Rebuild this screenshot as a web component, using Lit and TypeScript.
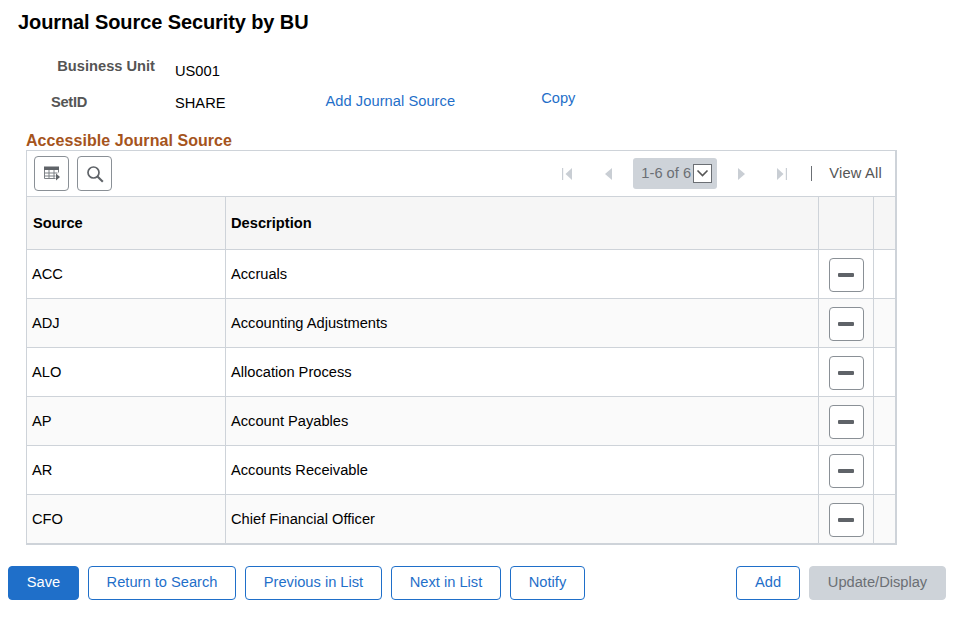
import { LitElement, html, css, svg } from "lit";
import { customElement } from "lit/decorators.js";

const ROWS = [
  ["ACC", "Accruals"],
  ["ADJ", "Accounting Adjustments"],
  ["ALO", "Allocation Process"],
  ["AP", "Account Payables"],
  ["AR", "Accounts Receivable"],
  ["CFO", "Chief Financial Officer"],
];

const tri = (d: string) => svg`<path d=${d} fill="#c9ced4"></path>`;

@customElement("app-root")
export class AppRoot extends LitElement {
  static styles = css`
    :host {
      display: block;
      width: 963px;
      height: 624px;
      box-sizing: border-box;
      background: #fff;
      font-family: "Liberation Sans", Arial, sans-serif;
      font-size: 14.67px;
      color: #000;
      overflow: hidden;
    }
    h1 {
      margin: 0;
      padding: 12px 0 0 18px;
      font-size: 20px;
      letter-spacing: -0.1px;
      line-height: 21px;
      font-weight: bold;
      height: 21px;
    }
    .field-row {
      display: flex;
      align-items: flex-start;
      line-height: 16px;
    }
    .r1 { padding-top: 24px; height: 36px; }
    .r2 { height: 16px; }
    .label { font-weight: bold; color: #555; text-align: right; }
    .r1 .label { width: 155px; margin-top: 1px; }
    .r2 .label { width: 87px; margin-top: 1px; letter-spacing: -0.3px; }
    .r1 .value { margin-left: 20px; margin-top: 6px; }
    .r2 .value { margin-left: 88px; margin-top: 2px; }
    a { color: #1f6fc9; text-decoration: none; }
    .r2 .link1 { margin-left: 100px; letter-spacing: 0.05px; }
    .r2 .link2 { margin-left: 86px; margin-top: -3px; }
    h2 {
      margin: 23px 0 0 26px;
      font-size: 16px;
      line-height: 18px;
      height: 18px;
      font-weight: bold;
      letter-spacing: 0.06px;
      color: #a5541c;
    }
    .grid {
      margin-left: 26px;
      width: 871px;
      box-sizing: border-box;
      border: 1px solid #ced3d9;
      border-right-width: 2px;
      border-bottom-width: 2px;
    }
    .toolbar {
      height: 46px;
      box-sizing: border-box;
      display: flex;
      align-items: center;
      padding: 0 13px 0 7px;
      border-bottom: 1px solid #ced3d9;
      background: #fff;
    }
    .tool {
      width: 35px;
      height: 35px;
      box-sizing: border-box;
      border: 1px solid #8a9096;
      border-radius: 4px;
      background: #fff;
      display: flex;
      align-items: center;
      justify-content: center;
      margin-right: 8px;
      padding: 0;
    }
    .spacer { flex: 1; }
    .nav { display: block; height: 14px; }
    .wide { width: 10px; }
    .slim { width: 8px; }
    .nav1 { margin-right: 32px; }
    .nav2 { margin-right: 21px; }
    .nav3 { margin-left: 21px; margin-right: 31px; }
    .range {
      width: 84px;
      height: 31px;
      box-sizing: border-box;
      background: #ced3d9;
      border-radius: 3px;
      display: flex;
      align-items: center;
      padding: 0 0 2px 8px;
      color: #6b6f74;
      white-space: nowrap;
    }
    .sel {
      width: 19px;
      height: 19px;
      box-sizing: border-box;
      border: 1px solid #6b6f74;
      background: #fff;
      margin: 2px 0 0 2px;
      display: flex;
      align-items: center;
      justify-content: center;
    }
    .divider { width: 1px; height: 15px; background: #6b6f74; margin: 0 17px 0 24px; }
    .viewall { color: #555; letter-spacing: 0.2px; padding-bottom: 2px; }
    .row {
      display: grid;
      grid-template-columns: 199px 593px 55px 22px;
      height: 49px;
      box-sizing: border-box;
      border-bottom: 1px solid #ced3d9;
    }
    .row:last-child { border-bottom: none; height: 48px; }
    .head { height: 53px; background: #f6f6f6; font-weight: bold; }
    .odd { background: #fff; }
    .even { background: #fafafa; }
    .cell {
      display: flex;
      align-items: center;
      padding-left: 5px;
      border-right: 1px solid #ced3d9;
      min-width: 0;
    }
    .head .cell:first-child { padding-left: 6px; }
    .cell:last-child { border-right: none; }
    .cell.act { padding: 0; justify-content: center; }
    .del {
      width: 35px;
      height: 34px;
      box-sizing: border-box;
      border: 1px solid #8a9096;
      border-radius: 4px;
      background: #fff;
      padding: 0;
      margin-top: 2px;
      display: flex;
      align-items: center;
      justify-content: center;
    }
    .del span { display: block; width: 16px; height: 4px; background: #5f6368; border-radius: 1px; }
    .footer {
      display: flex;
      padding: 21px 17px 0 8px;
    }
    .btn {
      height: 34px;
      box-sizing: border-box;
      border: 1px solid #1f6fc9;
      border-radius: 4px;
      background: #fff;
      color: #1f6fc9;
      font: 14.67px "Liberation Sans", Arial, sans-serif;
      padding: 0 0 2px;
      margin-right: 9px;
    }
    .btn.primary { background: #1f6fc9; color: #fff; }
    .btn.disabled { background: #ced3d9; border-color: #ced3d9; color: #6b6f74; margin-right: 0; }
    .w-save { width: 71px; }
    .w-return { width: 148px; }
    .w-prev { width: 137px; }
    .w-next { width: 110px; }
    .w-notify { width: 75px; }
    .w-add { width: 64px; }
    .w-update { width: 137px; }
  `;

  render() {
    return html`
      <h1>Journal Source Security by BU</h1>
      <div class="field-row r1">
        <span class="label">Business Unit</span><span class="value">US001</span>
      </div>
      <div class="field-row r2">
        <span class="label">SetID</span><span class="value">SHARE</span>
        <a class="link1" href="#">Add Journal Source</a>
        <a class="link2" href="#">Copy</a>
      </div>
      <h2>Accessible Journal Source</h2>
      <div class="grid">
        <div class="toolbar">
          <button class="tool" aria-label="Personalize">
            <svg width="18" height="18" viewBox="0 0 18 18">
              <path d="M1 1.5h15v3.5H1z" fill="#5f6368"></path>
              <path d="M1.5 5v8.5h11M1.5 8h13M1.5 11h11M6 5v8.5M11 5v8.5M15.5 5v2.5" fill="none" stroke="#7d8186" stroke-width="1"></path>
              <path d="M13 8.5l4 3.5-4 3.5z" fill="#5f6368"></path>
            </svg>
          </button>
          <button class="tool" aria-label="Find">
            <svg width="18" height="18" viewBox="0 0 18 18">
              <circle cx="7.5" cy="7.5" r="5.5" fill="none" stroke="#5f6368" stroke-width="1.7"></circle>
              <path d="M11.5 11.5l5.3 5.3" stroke="#5f6368" stroke-width="2.1" fill="none"></path>
            </svg>
          </button>
          <div class="spacer"></div>
          <svg class="nav wide nav1" viewBox="0 0 10 14">${tri("M0 1h1.2v12H0z")}${tri("M10 1v12L3.5 7z")}</svg>
          <svg class="nav slim nav2" viewBox="0 0 8 14">${tri("M8 1v12L1 7z")}</svg>
          <div class="range">1-6 of 6<span class="sel">
            <svg width="13" height="9" viewBox="0 0 13 9"><path d="M1.5 1.5L6.5 6.5L11.5 1.5" fill="none" stroke="#555" stroke-width="1.6"></path></svg>
          </span></div>
          <svg class="nav slim nav3" viewBox="0 0 8 14">${tri("M0 1v12l7-6z")}</svg>
          <svg class="nav wide" viewBox="0 0 10 14">${tri("M0 1v12l6.5-6z")}${tri("M8.8 1H10v12H8.8z")}</svg>
          <span class="divider"></span>
          <span class="viewall">View All</span>
        </div>
        <div class="row head">
          <div class="cell">Source</div>
          <div class="cell">Description</div>
          <div class="cell"></div>
          <div class="cell"></div>
        </div>
        ${ROWS.map(
          (r, i) => html`
            <div class="row ${i % 2 ? "even" : "odd"}">
              <div class="cell">${r[0]}</div>
              <div class="cell">${r[1]}</div>
              <div class="cell act"><button class="del" aria-label="Delete row"><span></span></button></div>
              <div class="cell"></div>
            </div>
          `
        )}
      </div>
      <div class="footer">
        <button class="btn primary w-save">Save</button>
        <button class="btn w-return">Return to Search</button>
        <button class="btn w-prev">Previous in List</button>
        <button class="btn w-next">Next in List</button>
        <button class="btn w-notify">Notify</button>
        <div class="spacer"></div>
        <button class="btn w-add">Add</button>
        <button class="btn disabled w-update">Update/Display</button>
      </div>
    `;
  }
}
